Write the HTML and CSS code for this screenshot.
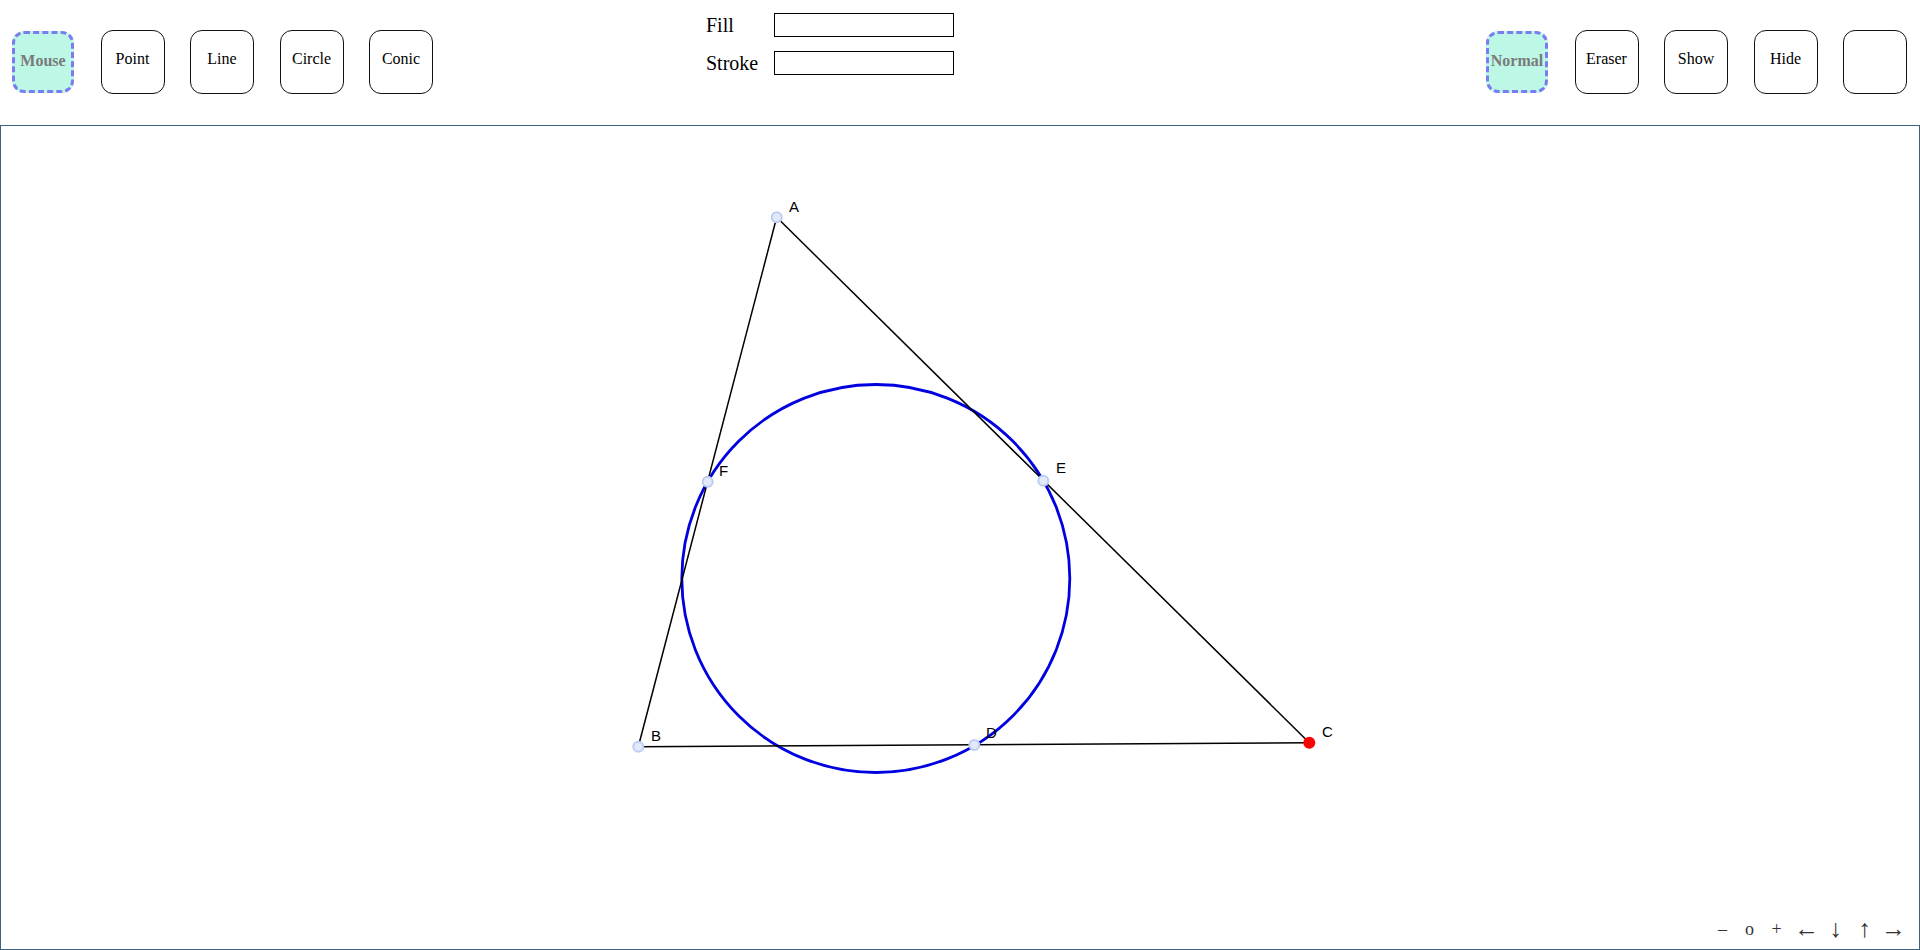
FILE: index.html
```html
<!DOCTYPE html>
<html lang="en">
<head>
  <meta charset="UTF-8">
  <meta name="viewport" content="width=device-width, initial-scale=1.0">
  <title>Geometry Board</title>
  <link rel="stylesheet" href="styles.css">
</head>
<body>
  <div class="toolbar">
    <div class="tool-group">
      <div class="tool active">Mouse</div>
      <div class="tool">Point</div>
      <div class="tool">Line</div>
      <div class="tool">Circle</div>
      <div class="tool">Conic</div>
    </div>

    <div class="colors">
      <div class="color-row">
        <label for="fill">Fill</label>
        <input type="text" id="fill">
      </div>
      <div class="color-row">
        <label for="stroke">Stroke</label>
        <input type="text" id="stroke">
      </div>
    </div>

    <div class="tool-group right">
      <div class="tool active">Normal</div>
      <div class="tool">Eraser</div>
      <div class="tool">Show</div>
      <div class="tool">Hide</div>
      <div class="tool"></div>
    </div>
  </div>

  <div class="board" id="board">
    <svg class="board-svg" viewBox="1 126 1918 823" width="1918" height="823">
      <!-- circle through D, E, F -->
      <circle class="conic" cx="875.8" cy="578.5" r="194"></circle>

      <!-- triangle sides -->
      <line class="segment" x1="776.7" y1="217.3" x2="638.3" y2="746.7"></line>
      <line class="segment" x1="776.7" y1="217.3" x2="1309.3" y2="742.7"></line>
      <line class="segment" x1="638.3" y1="746.7" x2="1309.3" y2="742.7"></line>

      <!-- points -->
      <circle class="pt" cx="776.7" cy="217.3" r="5"></circle>
      <circle class="pt" cx="638.3" cy="746.7" r="5"></circle>
      <circle class="pt" cx="707.7" cy="481.7" r="5"></circle>
      <circle class="pt" cx="1043.3" cy="480.7" r="5"></circle>
      <circle class="pt" cx="974.3" cy="745" r="5"></circle>
      <circle class="pt-free" cx="1309.3" cy="742.7" r="6"></circle>

      <!-- labels -->
      <text class="label" x="789" y="211.5">A</text>
      <text class="label" x="651" y="741">B</text>
      <text class="label" x="1322" y="737">C</text>
      <text class="label" x="986" y="738">D</text>
      <text class="label" x="1056" y="473">E</text>
      <text class="label" x="719" y="476">F</text>
    </svg>

    <div class="navbar">
      <span class="nav-btn">&ndash;</span>
      <span class="nav-btn">o</span>
      <span class="nav-btn zoom-in">+</span>
      <span class="nav-btn arrow">&larr;</span>
      <span class="nav-btn arrow">&darr;</span>
      <span class="nav-btn arrow">&uarr;</span>
      <span class="nav-btn arrow">&rarr;</span>
    </div>
  </div>
</body>
</html>
```

FILE: styles.css
```css
/* General */
body {
  margin: 0;
  font-family: "Liberation Serif", "Times New Roman", serif;
  background: #ffffff;
  color: #000000;
}

/* Toolbar */
.toolbar {
  height: 125px;
  display: flex;
  align-items: flex-start;
  padding: 0 13px 0 11px;
  box-sizing: border-box;
}

.tool-group {
  display: flex;
  gap: 25.5px;
  padding-top: 30px;
}

.tool-group.right {
  margin-left: auto;
}

.tool {
  width: 64px;
  height: 64px;
  box-sizing: border-box;
  border: 1px solid #111111;
  border-radius: 12px;
  padding-top: 19px;
  text-align: center;
  font-size: 16px;
  line-height: 18px;
  cursor: pointer;
}

.tool.active {
  width: 62px;
  height: 62px;
  margin: 1px;
  padding-top: 18px;
  border: 3px dashed #7b7cf0;
  background: #bdf8e6;
  color: #7a7a7a;
  font-weight: bold;
}

/* Fill / Stroke */
.colors {
  display: flex;
  flex-direction: column;
  gap: 14px;
  padding-top: 13px;
  margin-left: 273px;
}

.color-row {
  display: flex;
  align-items: center;
}

.color-row label {
  width: 68px;
  font-size: 20px;
}

.color-row input {
  width: 180px;
  height: 24px;
  box-sizing: border-box;
  border: 1px solid #000000;
  padding: 0 4px;
  outline: none;
}

/* Board */
.board {
  position: relative;
  width: 1920px;
  height: 825px;
  box-sizing: border-box;
  border: 1px solid #3a6386;
  overflow: hidden;
}

.board-svg {
  display: block;
}

.conic {
  fill: none;
  stroke: #0000e0;
  stroke-width: 2.8;
}

.segment {
  stroke: #000000;
  stroke-width: 1.5;
}

.pt {
  fill: #e2e9f9;
  stroke: #bccdf4;
  stroke-width: 2;
}

.pt-free {
  fill: #ff0000;
}

.label {
  font-family: "Liberation Sans", Arial, sans-serif;
  font-size: 15px;
  fill: #000000;
}

/* Navigation bar */
.navbar {
  position: absolute;
  right: 11px;
  bottom: 6px;
  display: flex;
  align-items: center;
  font-size: 18px;
  color: #333333;
}

.nav-btn {
  width: 27px;
  text-align: center;
  cursor: pointer;
}

.nav-btn.zoom-in {
  margin-right: 2px;
}

.nav-btn.arrow {
  width: 29px;
  font-size: 25px;
}
```
